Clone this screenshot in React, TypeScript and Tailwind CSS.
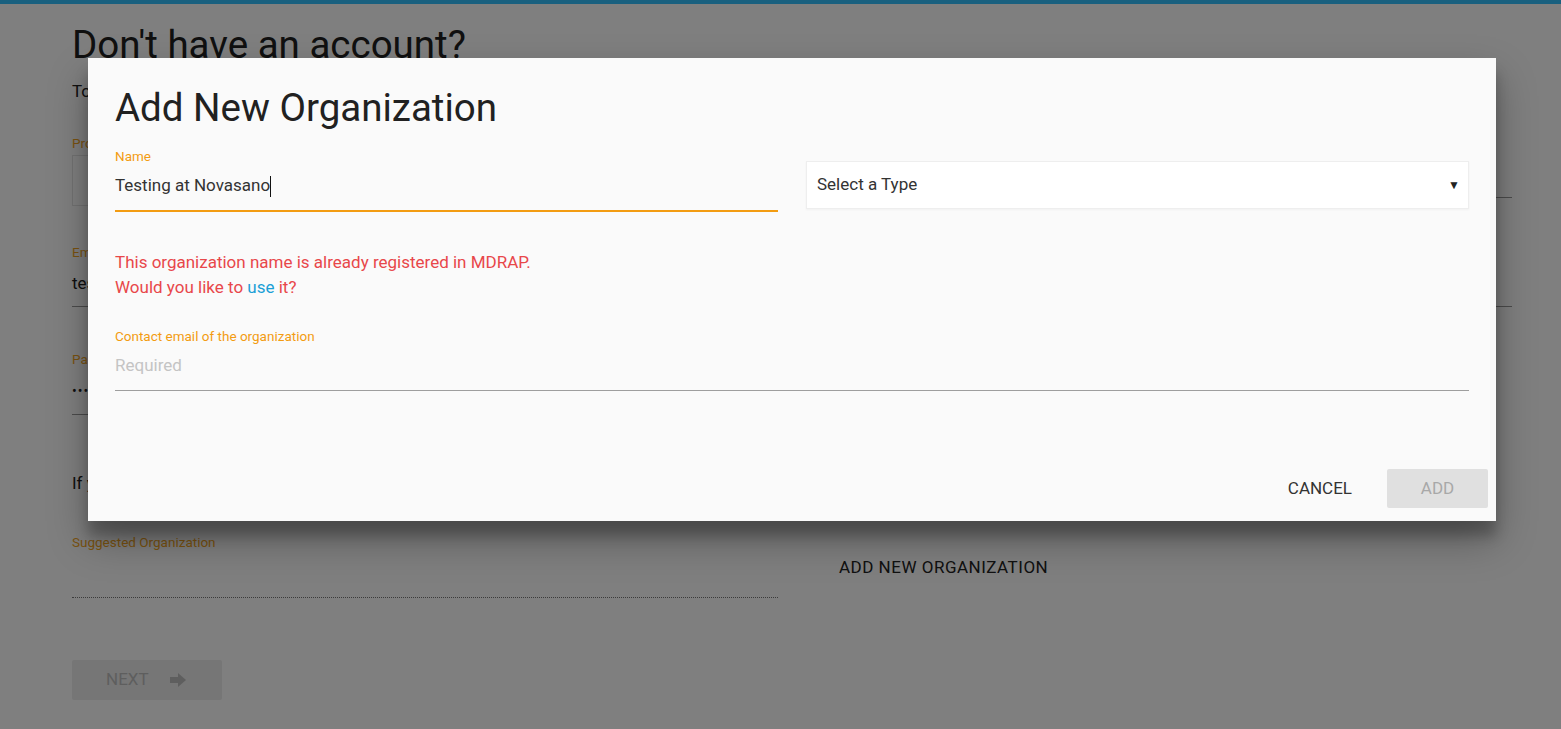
const font = { fontFamily: 'Roboto, "Noto Sans", sans-serif' };

// solid block arrow used on the NEXT button
function BlockArrow({ className }: { className?: string }) {
  return (
    <svg viewBox="0 0 16 14" width={16} height={14} className={className} fill="currentColor">
      <rect x="0" y="4" width="8" height="6" />
      <path d="M8 0 L16 7 L8 14 Z" />
    </svg>
  );
}

export default function App() {
  return (
    <div className="relative w-[1561px] h-[729px] overflow-hidden bg-white text-[#212121]" style={font}>
      {/* Page behind the dialog */}
      <div className="h-[4px] bg-[#33c0ff]" />
      <div className="ml-[72px] w-[1440px]">
        <h1 className="mt-[19px] text-[38.5px] leading-[43px] font-normal">Don't have an account?</h1>
        <p className="mt-[13px] text-[17px] leading-[24px] text-[#222]">
          To register, please fill in your details and select the organization you belong to.
        </p>

        {/* Profile + right field */}
        <div className="mt-[32px] grid grid-cols-2 gap-[28px]">
          <div>
            <div className="text-[13.5px] leading-[16px] text-[#f5a623]">Profile</div>
            <div className="mt-[4px] h-[51px] border border-[#e5e5e5] bg-white" />
          </div>
          <div className="flex flex-col justify-end">
            <div className="h-[38px] border-b border-[#999]" />
            <div className="h-[8px]" />
          </div>
        </div>

        {/* Email */}
        <div className="mt-[38px]">
          <div className="text-[13.5px] leading-[16px] text-[#f5a623]">Email</div>
          <div className="h-[47px] border-b border-[#999] text-[17px] leading-[24px] flex items-center">
            test@novasano.com
          </div>
        </div>

        {/* Password */}
        <div className="mt-[44px] grid grid-cols-2 gap-[28px]">
          <div>
            <div className="text-[13.5px] leading-[16px] text-[#f5a623]">Password</div>
            <div className="h-[48px] border-b border-[#999] text-[14px] leading-[24px] flex items-center tracking-[1px]">
              ••••••••••
            </div>
          </div>
          <div />
        </div>

        <p className="mt-[56px] text-[17px] leading-[24px] text-[#222]">
          If you can't find your organization, you can add a new one.
        </p>

        <div className="mt-[39px] grid grid-cols-2 gap-[28px]">
          <div>
            <div className="text-[13.5px] leading-[16px] text-[#f5a623]">Suggested Organization</div>
            <div className="h-[48px] border-b border-dotted border-[#777]" />
          </div>
          <div className="flex items-start">
            <button className="mt-[16px] ml-[17px] px-[16px] h-[36px] text-[17px] tracking-[0.5px] text-[#222] uppercase">
              Add New Organization
            </button>
          </div>
        </div>

        <button className="mt-[62px] w-[150px] h-[40px] bg-[#ececec] rounded-[2px] flex items-center pl-[34px] gap-[21px] text-[17px] text-[#bdbdbd] uppercase">
          Next
          <BlockArrow className="text-[#bdbdbd]" />
        </button>
      </div>

      {/* Overlay */}
      <div className="absolute inset-0 bg-black/50" />

      {/* Dialog */}
      <div className="absolute left-[88px] top-[58px] w-[1408px] h-[463px] bg-[#fafafa] flex flex-col shadow-[0_19px_38px_rgba(0,0,0,0.30),0_15px_12px_rgba(0,0,0,0.22)]">
        <div className="px-[27px] pt-[28px]">
          <h2 className="text-[38.5px] leading-[43px] font-normal text-[#212121]">Add New Organization</h2>

          <div className="mt-[19px] grid grid-cols-2 gap-[28px]">
            <div>
              <div className="text-[13.5px] leading-[16px] text-[#f39c12]">Name</div>
              <div className="h-[48px] pt-[9px] border-b-2 border-[#f39c12] text-[17px] leading-[24px] text-[#333] flex items-start">
                <span>Testing at Novasano</span>
                <span className="mt-[3px] h-[21px] border-l border-[#111]" />
              </div>
            </div>
            <div className="pt-[13px]">
              <div className="h-[48px] bg-white border border-[#eeeeee] shadow-[0_1px_2px_rgba(0,0,0,0.04)] flex items-center justify-between pl-[10px] pr-[8px] text-[17px] text-[#333]">
                <span>Select a Type</span>
                <span className="text-[12px] text-[#222]">▼</span>
              </div>
            </div>
          </div>

          <div className="mt-[38px] text-[17px] leading-[25px] text-[#e8474a]">
            <div>This organization name is already registered in MDRAP.</div>
            <div>
              Would you like to <span className="text-[#1a9fd6] cursor-pointer">use</span> it?
            </div>
          </div>

          <div className="mt-[28px]">
            <div className="text-[13.5px] leading-[16px] text-[#f39c12]">Contact email of the organization</div>
            <div className="h-[47px] pt-[9px] border-b border-[#9e9e9e] text-[17px] leading-[24px] text-[#c4c4c4]">
              Required
            </div>
          </div>
        </div>

        <div className="mt-auto flex justify-end items-center gap-[6px] px-[8px] pb-[13px]">
          <button className="h-[39px] px-[29px] text-[17px] text-[#333] uppercase">Cancel</button>
          <button className="h-[39px] w-[101px] rounded-[2px] bg-[#e0e0e0] text-[17px] text-[#a8a8a8] uppercase">Add</button>
        </div>
      </div>
    </div>
  );
}
